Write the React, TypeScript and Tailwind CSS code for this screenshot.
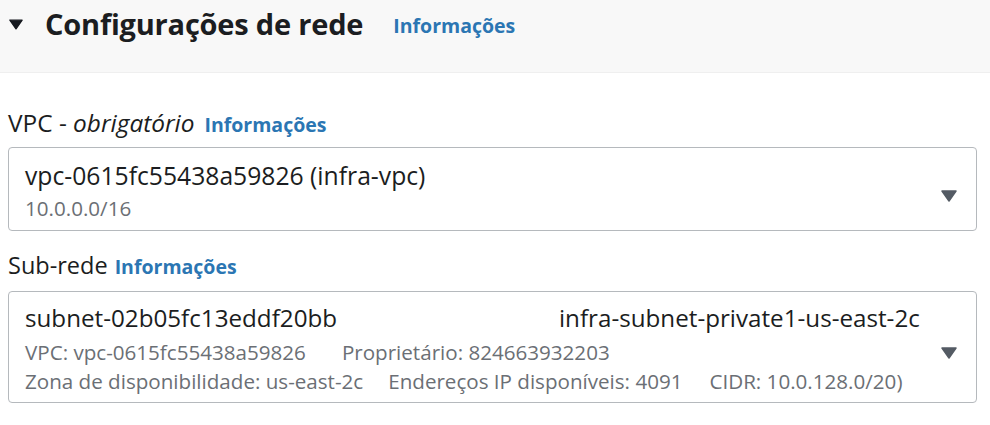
import React from "react";

function Caret({ className }: { className?: string }) {
  return (
    <svg viewBox="0 0 16 12" className={className} fill="currentColor">
      <path d="M1 1h14L8 11z" strokeLinejoin="round" stroke="currentColor" strokeWidth="1.5" />
    </svg>
  );
}

function Info() {
  return <span className="font-bold text-[#2b76b3] text-[19.5px]">Informações</span>;
}

export default function App() {
  return (
    <div className="w-[990px] h-[425px] bg-white text-[#1b1d21] font-['Open_Sans',sans-serif] overflow-hidden">
      <div className="h-[73px] bg-[#f8f8f8] border-b border-[#efefef] flex items-start pt-[4px] pl-[9px]">
        <div className="flex items-center h-[40px]">
          <Caret className="w-[14px] h-[11px] text-[#16191f]" />
          <h2 className="ml-[22px] text-[29px] font-bold tracking-[-0.2px]">Configurações de rede</h2>
          <span className="ml-[30px] mt-[4px]"><Info /></span>
        </div>
      </div>

      <div className="px-[8px] pt-[34px]">
        <div className="text-[24.4px] flex items-baseline gap-[10px] h-[32px] leading-[32px]">
          <span>
            VPC - <i>obrigatório</i>
          </span>
          <Info />
        </div>
        <div className="mt-[8px] w-[969px] h-[84px] border border-[#b5b9bd] rounded-[4px] flex items-start pl-[16px] pr-[18px] pt-[13px]">
          <div className="flex-1">
            <div className="text-[24.7px] leading-[30px]">vpc-0615fc55438a59826 (infra-vpc)</div>
            <div className="text-[20.6px] leading-[28px] text-[#6b6f75] mt-[3px]">10.0.0.0/16</div>
          </div>
          <Caret className="self-center w-[18px] h-[12px] text-[#545b64]" />
        </div>

        <div className="mt-[18px] text-[23.5px] flex items-baseline gap-[7px] h-[32px] leading-[32px]">
          <span>Sub-rede</span>
          <Info />
        </div>
        <div className="mt-[10px] w-[969px] h-[112px] border border-[#b5b9bd] rounded-[4px] flex items-start pl-[16px] pr-[18px] pt-[11px]">
          <div className="flex-1">
            <div className="flex text-[24.2px] leading-[30px]">
              <span className="w-[534px]">subnet-02b05fc13eddf20bb</span>
              <span>infra-subnet-private1-us-east-2c</span>
            </div>
            <div className="text-[20.6px] leading-[29px] text-[#6b6f75] mt-[5px] flex">
              <span>VPC: vpc-0615fc55438a59826</span>
              <span className="ml-[36px]">Proprietário: 824663932203</span>
            </div>
            <div className="text-[20.6px] leading-[29px] text-[#6b6f75] flex">
              <span>Zona de disponibilidade: us-east-2c</span>
              <span className="ml-[25px]">Endereços IP disponíveis: 4091</span>
              <span className="ml-[27px]">CIDR: 10.0.128.0/20)</span>
            </div>
          </div>
          <Caret className="self-center w-[18px] h-[12px] text-[#545b64]" />
        </div>
      </div>
    </div>
  );
}
